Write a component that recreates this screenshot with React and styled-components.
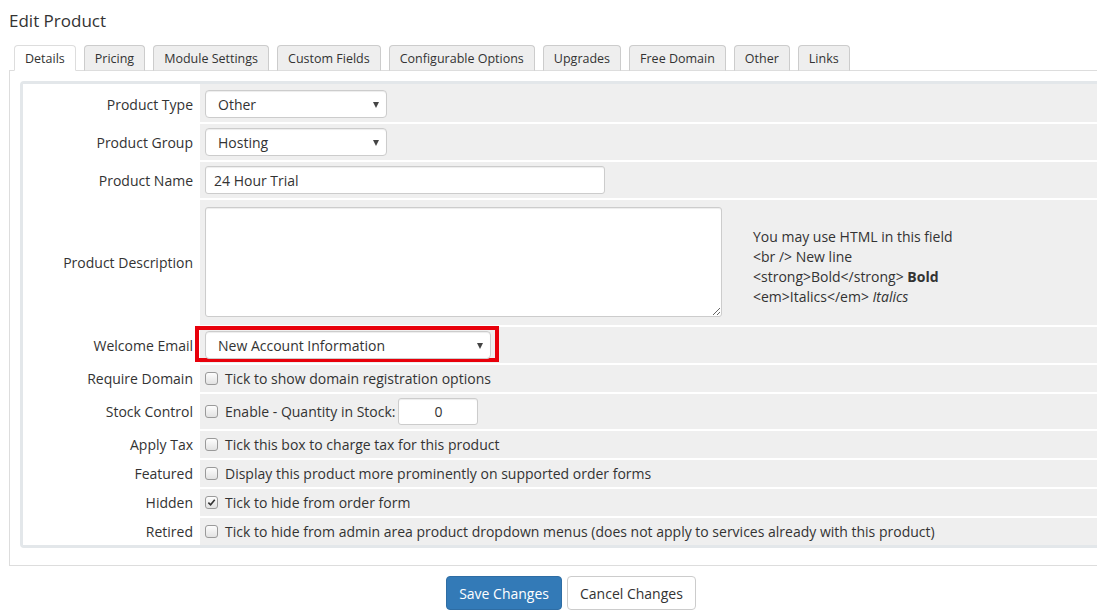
import styled, { createGlobalStyle } from "styled-components";

const GlobalStyle = createGlobalStyle`
  html, body {
    margin: 0;
    padding: 0;
    background: #fff;
    overflow: hidden;
  }
  body {
    font-family: "Open Sans", "Liberation Sans", sans-serif;
    font-size: 14px;
    color: #333;
  }
  * { box-sizing: border-box; }
`;

const tabs = [
  "Details",
  "Pricing",
  "Module Settings",
  "Custom Fields",
  "Configurable Options",
  "Upgrades",
  "Free Domain",
  "Other",
  "Links",
];

const checkRows = [
  { label: "Apply Tax", text: "Tick this box to charge tax for this product" },
  { label: "Featured", text: "Display this product more prominently on supported order forms" },
  { label: "Hidden", text: "Tick to hide from order form", checked: true },
  {
    label: "Retired",
    text: "Tick to hide from admin area product dropdown menus (does not apply to services already with this product)",
  },
];

function Check({ checked }) {
  return (
    <Box>
      {checked && (
        <svg width="9" height="9" viewBox="0 0 10 10">
          <path d="M1.5 5.2 L4 7.6 L8.6 2" fill="none" stroke="#333" strokeWidth="1.8" />
        </svg>
      )}
    </Box>
  );
}

function Dropdown({ width, value }) {
  return (
    <SelectWrap $width={width}>
      <Select defaultValue={value}>
        <option>{value}</option>
      </Select>
    </SelectWrap>
  );
}

export default function App() {
  return (
    <Page>
      <GlobalStyle />
      <Title>Edit Product</Title>

      <TabList>
        {tabs.map((t, i) => (
          <Tab key={t} $active={i === 0}>
            {t}
          </Tab>
        ))}
      </TabList>

      <TabContent>
        <FormTable>
          <tbody>
            <Row>
              <Label>Product Type</Label>
              <Field>
                <Dropdown width={182} value="Other" />
              </Field>
            </Row>
            <Row>
              <Label>Product Group</Label>
              <Field>
                <Dropdown width={182} value="Hosting" />
              </Field>
            </Row>
            <Row>
              <Label>Product Name</Label>
              <Field>
                <TextInput $width={400} defaultValue="24 Hour Trial" />
              </Field>
            </Row>
            <Row>
              <Label>Product Description</Label>
              <Field>
                <DescLine>
                  <TextArea />
                  <Help>
                    You may use HTML in this field
                    <br />
                    &lt;br /&gt; New line
                    <br />
                    &lt;strong&gt;Bold&lt;/strong&gt; <strong>Bold</strong>
                    <br />
                    &lt;em&gt;Italics&lt;/em&gt; <em>Italics</em>
                  </Help>
                </DescLine>
              </Field>
            </Row>
            <Row>
              <Label>Welcome Email</Label>
              <Field>
                <Highlight>
                  <Dropdown width={286} value="New Account Information" />
                </Highlight>
              </Field>
            </Row>
            <Row>
              <Label>Require Domain</Label>
              <Field>
                <CheckLine>
                  <Check />
                  Tick to show domain registration options
                </CheckLine>
              </Field>
            </Row>
            <Row>
              <Label>Stock Control</Label>
              <Field>
                <CheckLine>
                  <Check />
                  Enable - Quantity in Stock:
                  <QtyInput defaultValue="0" />
                </CheckLine>
              </Field>
            </Row>
            {checkRows.map((r) => (
              <Row key={r.label}>
                <Label>{r.label}</Label>
                <Field>
                  <CheckLine>
                    <Check checked={r.checked} />
                    {r.text}
                  </CheckLine>
                </Field>
              </Row>
            ))}
          </tbody>
        </FormTable>
      </TabContent>

      <Actions>
        <Button $primary>Save Changes</Button>
        <Button>Cancel Changes</Button>
      </Actions>
    </Page>
  );
}

const Page = styled.div`
  width: 1133px;
  padding: 9px 0 0 9px;
`;

const Title = styled.h1`
  margin: 0 0 13px;
  font-size: 17px;
  font-weight: 400;
  line-height: 23px;
  color: #333;
`;

const TabList = styled.ul`
  display: flex;
  gap: 8px;
  list-style: none;
  margin: 0;
  padding: 0 0 0 5px;
  border-bottom: 1px solid #ddd;
`;

const Tab = styled.li`
  height: 26px;
  padding: 0 10px;
  margin-bottom: -1px;
  font-size: 12.5px;
  line-height: 25px;
  color: #333;
  border: 1px solid ${(p) => (p.$active ? "#ddd" : "#ccc")};
  border-bottom-color: ${(p) => (p.$active ? "#fff" : "#ddd")};
  border-radius: 4px 4px 0 0;
  background: ${(p) => (p.$active ? "#fff" : "#eee")};
  cursor: pointer;
`;

const TabContent = styled.div`
  border: 1px solid #ddd;
  border-top: none;
  padding: 10px 10px 17px;
`;

const FormTable = styled.table`
  width: 100%;
  border: 3px solid #e3e7ea;
  border-radius: 4px;
  border-spacing: 0;
  border-collapse: separate;
`;

const Row = styled.tr`
  &:first-child td {
    padding-top: 6px;
  }
  &:last-child td {
    border-bottom: none;
  }
`;

const Label = styled.td`
  width: 177px;
  padding: 4px 7px 4px 0;
  text-align: right;
  white-space: nowrap;
  background: #fff;
  border-bottom: 2px solid #fff;
  vertical-align: middle;
  line-height: 19px;
`;

const Field = styled.td`
  padding: 4px 5px;
  background: #efefef;
  border-bottom: 2px solid #fff;
  line-height: 19px;
  vertical-align: middle;
`;

const SelectWrap = styled.div`
  position: relative;
  width: ${(p) => p.$width}px;

  &::after {
    content: "";
    position: absolute;
    right: 8px;
    top: 12px;
    border-left: 3px solid transparent;
    border-right: 3px solid transparent;
    border-top: 6px solid #444;
    pointer-events: none;
  }
`;

const Select = styled.select`
  appearance: none;
  width: 100%;
  height: 28px;
  padding: 0 12px;
  font-family: inherit;
  font-size: 14px;
  color: #333;
  background: #fff;
  border: 1px solid #ccc;
  border-radius: 4px;
  box-shadow: inset 0 1px 1px rgba(0, 0, 0, 0.075);
`;

const TextInput = styled.input`
  width: ${(p) => p.$width}px;
  height: 28px;
  padding: 0 8px;
  font-family: inherit;
  font-size: 14px;
  color: #333;
  border: 1px solid #ccc;
  border-radius: 3px;
  box-shadow: inset 0 1px 1px rgba(0, 0, 0, 0.075);
`;

const DescLine = styled.div`
  display: flex;
  align-items: center;
  gap: 31px;
`;

const TextArea = styled.textarea`
  width: 517px;
  height: 110px;
  margin: 3px 0 4px;
  border: 1px solid #ccc;
  border-radius: 3px;
  font-family: inherit;
  resize: both;
  box-shadow: inset 0 1px 1px rgba(0, 0, 0, 0.075);
`;

const Help = styled.div`
  font-size: 14px;
  line-height: 20px;
  padding-top: 8px;

  strong { font-weight: 700; }
`;

/* red annotation frame drawn over the select */
const Highlight = styled.div`
  position: relative;
  display: inline-block;

  &::before {
    content: "";
    position: absolute;
    top: -5px;
    right: -8px;
    bottom: -3px;
    left: -10px;
    border: 4px solid #e8000b;
    pointer-events: none;
  }
`;

const CheckLine = styled.div`
  display: flex;
  align-items: center;
  gap: 7px;
  white-space: nowrap;
  min-height: 19px;
`;

const Box = styled.span`
  display: inline-flex;
  align-items: center;
  justify-content: center;
  width: 13px;
  height: 13px;
  border: 1px solid #9a9a9a;
  border-radius: 3px;
  background: linear-gradient(#fdfdfd, #e2e2e2);
  flex-shrink: 0;
`;

const QtyInput = styled.input`
  width: 80px;
  height: 27px;
  margin-left: -4px;
  text-align: center;
  font-family: inherit;
  font-size: 14px;
  color: #333;
  border: 1px solid #ccc;
  border-radius: 3px;
  box-shadow: inset 0 1px 1px rgba(0, 0, 0, 0.075);
`;

const Actions = styled.div`
  display: flex;
  justify-content: center;
  gap: 5px;
  margin-top: 10px;
`;

const Button = styled.button`
  height: 34px;
  padding: 0 12px;
  font-family: inherit;
  font-size: 14px;
  border-radius: 4px;
  border: 1px solid ${(p) => (p.$primary ? "#2e6da4" : "#ccc")};
  background: ${(p) => (p.$primary ? "#337ab7" : "#fff")};
  color: ${(p) => (p.$primary ? "#fff" : "#333")};
  cursor: pointer;
`;
